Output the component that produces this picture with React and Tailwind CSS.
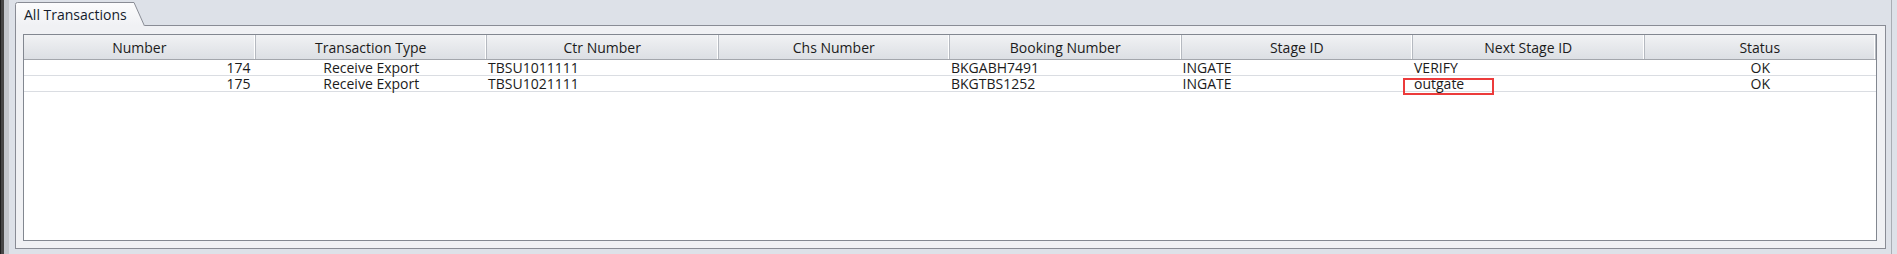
import React from 'react';

const columns = [
  { title: 'Number', key: 'number', align: 'right' },
  { title: 'Transaction Type', key: 'type', align: 'center' },
  { title: 'Ctr Number', key: 'ctr', align: 'left' },
  { title: 'Chs Number', key: 'chs', align: 'left' },
  { title: 'Booking Number', key: 'booking', align: 'left' },
  { title: 'Stage ID', key: 'stage', align: 'left' },
  { title: 'Next Stage ID', key: 'next', align: 'left' },
  { title: 'Status', key: 'status', align: 'center' },
];

const transactions = [
  { number: '174', type: 'Receive Export', ctr: 'TBSU1011111', chs: '', booking: 'BKGABH7491', stage: 'INGATE', next: 'VERIFY', status: 'OK' },
  { number: '175', type: 'Receive Export', ctr: 'TBSU1021111', chs: '', booking: 'BKGTBS1252', stage: 'INGATE', next: 'outgate', status: 'OK' },
];

const alignClass = {
  right: 'text-right pr-[5px]',
  center: 'text-center',
  left: 'text-left pl-[1px]',
};

// tab shape with slanted right edge
const TabShape = () => (
  <svg width="130" height="24" viewBox="0 0 130 24" className="absolute inset-0">
    <defs>
      <linearGradient id="tabFill" x1="0" y1="0" x2="0" y2="1">
        <stop offset="0" stopColor="#fcfcfd" />
        <stop offset="1" stopColor="#f0f1f4" />
      </linearGradient>
    </defs>
    <path d="M0.5 24 L0.5 2.5 Q0.5 0.5 2.5 0.5 L119 0.5 L129.5 24 Z" fill="url(#tabFill)" />
    <path d="M0.5 24 L0.5 2.5 Q0.5 0.5 2.5 0.5 L119 0.5 L129.5 24" fill="none" stroke="#898c95" strokeWidth="1" />
  </svg>
);

const App = () => {
  return (
    <div
      className="relative flex w-[1897px] h-[254px] bg-[#dde1e8] text-[14px] text-[#1b1b1b] overflow-hidden"
      style={{ fontFamily: '"Open Sans", "Noto Sans", sans-serif' }}
    >
      {/* left window frame */}
      <div className="w-[1px] bg-[#1e1e1e]"></div>
      <div className="w-[3px] bg-[#464646]"></div>
      <div className="w-[5px] bg-[#c3c7cd]"></div>
      <div className="w-[6px] bg-[#dde1e8]"></div>

      {/* tab control */}
      <div className="flex flex-col w-[1871px] h-[249px]">
        <div className="flex h-[26px] shrink-0">
          <div className="relative w-[130px] h-[24px] self-end">
            <TabShape />
            <div className="relative pl-[9px] pt-[3px] leading-[19px] text-[#141c2c]">All Transactions</div>
          </div>
          <div className="flex-1 border-b border-[#898c95]"></div>
        </div>

        <div className="flex-1 flex border-x border-b border-[#898c95] bg-[#f0f1f4] pl-[7px] pr-[8px] pt-[8px] pb-[7px]">
          <div className="flex-1 flex flex-col border border-[#828790] bg-white">
            {/* Header */}
            <div className="grid grid-cols-8 h-[25px] shrink-0 border-b border-[#a3a6ac] bg-linear-to-b from-[#f1f2f4] to-[#dcdfe4]">
              {columns.map((col) => (
                <div
                  key={col.key}
                  className="border-r border-[#b5b9c0] shadow-[inset_-1px_0_0_#ffffff] text-center pt-[3px] leading-[19px] whitespace-nowrap"
                >
                  {col.title}
                </div>
              ))}
            </div>

            {/* Rows */}
            {transactions.map((row) => (
              <div key={row.number} className="grid grid-cols-8 h-[16px] shrink-0 border-b border-[#dadde2]">
                {columns.map((col) => (
                  <div key={col.key} className={`${alignClass[col.align]} leading-[15px] whitespace-nowrap`}>
                    {row[col.key]}
                  </div>
                ))}
              </div>
            ))}
          </div>
        </div>
      </div>

      {/* right window frame */}
      <div className="w-[5px] bg-[#dde1e8]"></div>
      <div className="w-[1px] bg-[#a9adb4]"></div>
      <div className="w-[5px] bg-[#dde1e8]"></div>

      {/* red highlight annotation */}
      <div className="absolute left-[1403px] top-[78px] w-[91px] h-[17px] border-2 border-[#ec3b3b]"></div>
    </div>
  );
};

export default App;
